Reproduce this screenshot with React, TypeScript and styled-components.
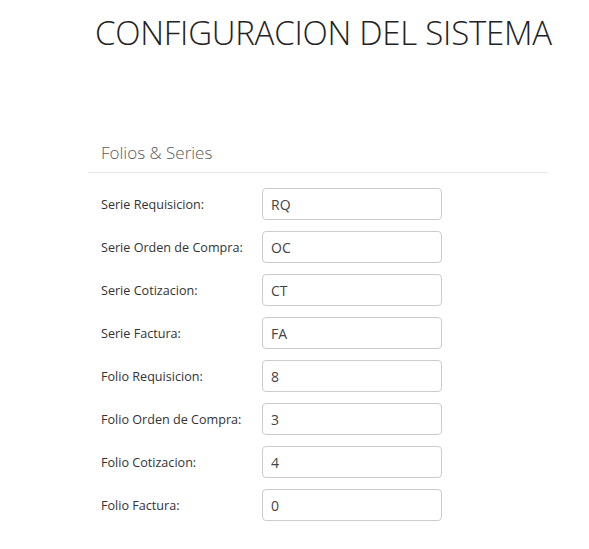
import styled, { createGlobalStyle } from 'styled-components';

const GlobalStyle = createGlobalStyle`
    html, body {
        margin: 0;
        padding: 0;
        background: #fff;
        font-family: "Open Sans", "Liberation Sans", sans-serif;
    }
`;

const fields = [
    { label: 'Serie Requisicion:', value: 'RQ' },
    { label: 'Serie Orden de Compra:', value: 'OC' },
    { label: 'Serie Cotizacion:', value: 'CT' },
    { label: 'Serie Factura:', value: 'FA' },
    { label: 'Folio Requisicion:', value: '8' },
    { label: 'Folio Orden de Compra:', value: '3' },
    { label: 'Folio Cotizacion:', value: '4' },
    { label: 'Folio Factura:', value: '0' },
];

const App = () => {
    return (
        <PageWrap>
            <GlobalStyle />
            <Title>CONFIGURACION DEL SISTEMA</Title>
            <Section>
                <SectionTitle>Folios &amp; Series</SectionTitle>
                <FieldList>
                    {fields.map((f) => (
                        <FieldRow key={f.label}>
                            <FieldLabel>{f.label}</FieldLabel>
                            <FieldInput type="text" defaultValue={f.value} />
                        </FieldRow>
                    ))}
                </FieldList>
            </Section>
        </PageWrap>
    );
};

export default App;

const PageWrap = styled.div`
    padding: 0 0 0 88px;
    box-sizing: border-box;
    width: 589px;
    height: 549px;
    overflow: hidden;
`;

const Title = styled.h1`
    margin: 0;
    padding: 7px 0 0 7px;
    font-size: 33px;
    font-weight: 300;
    color: #222;
    line-height: 52px;
    letter-spacing: -0.25px;
    white-space: nowrap;
`;

const Section = styled.div`
    width: 460px;
    margin-top: 83px;
`;

const SectionTitle = styled.h3`
    margin: 0;
    padding: 0 0 8px 13px;
    font-size: 17px;
    font-weight: 300;
    color: #5a5a5a;
    line-height: 22px;
    border-bottom: 1px solid #e8e8e8;
`;

const FieldList = styled.div`
    display: flex;
    flex-direction: column;
    gap: 11px;
    padding: 15px 0 0 13px;
`;

const FieldRow = styled.div`
    display: grid;
    grid-template-columns: 161px 180px;
    align-items: center;
`;

const FieldLabel = styled.label`
    font-size: 12.6px;
    color: #333;
`;

const FieldInput = styled.input`
    box-sizing: border-box;
    width: 180px;
    height: 32px;
    padding: 0 8px;
    border: 1px solid #ccc;
    border-radius: 4px;
    font-family: "Open Sans", "Liberation Sans", sans-serif;
    font-size: 14px;
    color: #444;
    outline: none;
`;
